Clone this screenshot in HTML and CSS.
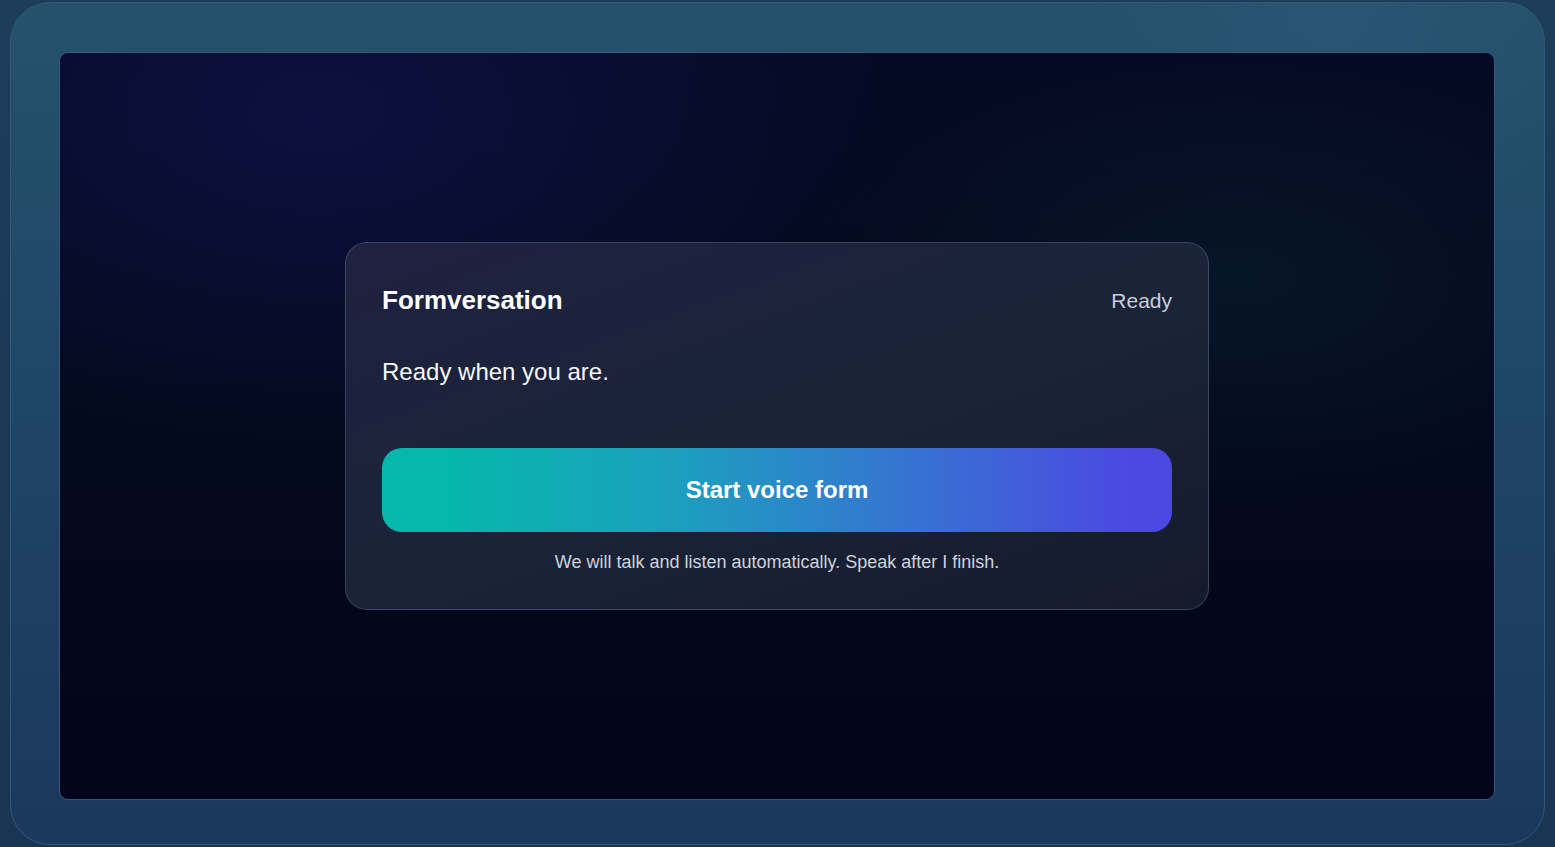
FILE: index.html
```html
<!DOCTYPE html>
<html lang="en">
<head>
  <meta charset="UTF-8">
  <title>Formversation</title>
  <meta name="viewport" content="width=device-width, initial-scale=1.0">
  <link rel="stylesheet" href="styles.css">
</head>
<body>

<div class="frame">
  <main class="stage">

    <!-- Voice form card -->
    <section class="card">
      <div class="card-head">
        <h1>Formversation</h1>
        <span class="status">Ready</span>
      </div>

      <p class="prompt">Ready when you are.</p>

      <button class="start-btn" type="button">Start voice form</button>

      <p class="hint">We will talk and listen automatically. Speak after I finish.</p>
    </section>

  </main>
</div>

</body>
</html>
```

FILE: styles.css
```css
/* Global styles */
html, body {
  height: 100%;
}

body {
  font-family: 'Liberation Sans', Arial, sans-serif;
  margin: 0;
  padding: 2px 10px 0;
  box-sizing: border-box;
  overflow: hidden;
  background: linear-gradient(180deg, #1d3d58 0%, #1a3552 100%);
  color: #f8fafc;
}

/* Outer rounded frame */
.frame {
  height: 843px;
  box-sizing: border-box;
  padding: 49px 49px 44px 48px;
  border: 1px solid #2e5a7e;
  border-radius: 40px;
  background:
    radial-gradient(circle at 86% 3%, rgba(50, 95, 135, 0.3), transparent 16%),
    linear-gradient(180deg, #24526b 0%, #1f4566 50%, #1b385c 100%);
}

/* Dark stage */
.stage {
  height: 100%;
  box-sizing: border-box;
  display: flex;
  align-items: center;
  justify-content: center;
  border: 1px solid #36557a;
  border-radius: 9px;
  background:
    radial-gradient(ellipse 40% 45% at 18% 8%, rgba(14, 16, 64, 0.95), transparent),
    radial-gradient(ellipse 30% 30% at 82% 30%, rgba(8, 26, 44, 0.7), transparent),
    linear-gradient(180deg, #050a24 0%, #040a1e 40%, #02051a 100%);
}

/* Card */
.card {
  width: 864px;
  box-sizing: border-box;
  padding: 36px 36px 35px;
  border: 1px solid rgba(120, 140, 175, 0.35);
  border-radius: 22px;
  background: linear-gradient(160deg, #1f2140 0%, #1a2438 50%, #161a2d 100%);
}

.card-head {
  display: flex;
  justify-content: space-between;
  align-items: center;
  height: 43px;
}

h1 {
  margin: 0;
  font-size: 26px;
  font-weight: 700;
  color: #ffffff;
}

.status {
  font-size: 21px;
  color: #c8cfdb;
}

.prompt {
  margin: 33px 0 0;
  font-size: 24px;
  line-height: 33px;
  color: #f5f7fb;
}

.start-btn {
  display: block;
  width: 100%;
  height: 84px;
  margin-top: 60px;
  border: none;
  border-radius: 20px;
  background: linear-gradient(90deg, #06b7ab 8%, #1aa2bd 35%, #3576d0 65%, #4c48e2 95%);
  color: #ffffff;
  font-family: inherit;
  font-size: 24px;
  font-weight: 700;
  cursor: pointer;
}

.hint {
  margin: 18px 0 0;
  font-size: 18px;
  line-height: 24px;
  text-align: center;
  color: #cdd3de;
}
```
